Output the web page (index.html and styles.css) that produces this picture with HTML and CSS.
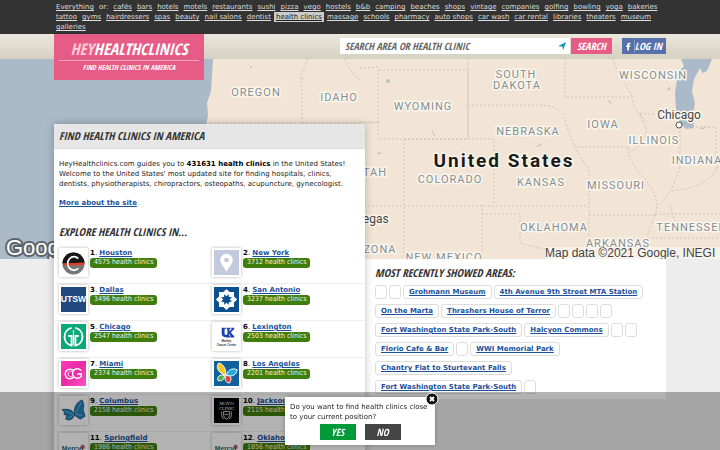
FILE: index.html
```html
<!DOCTYPE html>
<html lang="en">
<head>
    <meta charset="UTF-8">
    <meta name="viewport" content="width=device-width, initial-scale=1.0">
    <title>HeyHealthclinics</title>
    <link rel="stylesheet" href="styles.css">
</head>
<body>

    <nav class="topbar">
        <div class="wrap topbar-links">
            <a href="#">Everything</a><span>or:</span>
            <a href="#">cafés</a><a href="#">bars</a><a href="#">hotels</a><a href="#">motels</a><a href="#">restaurants</a><a href="#">sushi</a><a href="#">pizza</a><a href="#">vego</a><a href="#">hostels</a><a href="#">b&amp;b</a><a href="#">camping</a><a href="#">beaches</a><a href="#">shops</a><a href="#">vintage</a><a href="#">companies</a><a href="#">golfing</a><a href="#">bowling</a><a href="#">yoga</a><a href="#">bakeries</a>
            <a href="#">tattoo</a><a href="#">gyms</a><a href="#">hairdressers</a><a href="#">spas</a><a href="#">beauty</a><a href="#">nail salons</a><a href="#">dentist</a><a href="#" class="active">health clinics</a><a href="#">massage</a><a href="#">schools</a><a href="#">pharmacy</a><a href="#">auto shops</a><a href="#">car wash</a><a href="#">car rental</a><a href="#">libraries</a><a href="#">theaters</a><a href="#">museum</a>
            <a href="#">galleries</a>
        </div>
    </nav>

    <header class="header">
        <div class="wrap header-inner">
            <a href="#" class="logo">
                <span class="logo-name"><span class="logo-hey">HEY</span>HEALTHCLINICS</span>
                <span class="logo-tagline">FIND HEALTH CLINICS IN AMERICA</span>
            </a>
            <form class="search">
                <div class="search-field">
                    <input type="text" aria-label="Search area or health clinic" placeholder="SEARCH AREA OR HEALTH CLINIC">
                    <svg class="locate" viewBox="0 0 8 8"><path d="M0 4.2 8 0 5.2 8 4.2 4.6Z" fill="#1792b4"/></svg>
                </div>
                <button type="button" class="btn-search">SEARCH</button>
                <button type="button" class="btn-login"><svg viewBox="0 0 6 10"><path d="M1.6 10V5.6H.3V3.8h1.3V2.6C1.6 1 2.5.3 4 .3h1.5v1.800H4.500c-.6 0-.8.3-.8.8v.9h1.700l-.3 1.800H3.700V10Z" fill="#fff"/></svg><span>LOG IN</span></button>
            </form>
        </div>
    </header>

    <div class="map">
        <svg viewBox="0 0 720 200" preserveAspectRatio="xMidYMid slice">
            <rect width="720" height="200" fill="#f2e5d5"/>
            <path d="M0 0H213L211 32 207 44 208 56 206 68 211 84 216 110 230 150 250 200H0Z" fill="#abbac9"/>
            <path d="M681 0H712L707 12 702 14 700 9 694 20 692 32 695 44 693 55 694 69 686 70 680 64 676 50 675 34 678 14 684 7Z" fill="#abbac9"/>
            <g class="borders">
                <path d="M210 64H380M302 64V28C298 18 304 8 308 0M302 20H304M345 0C350 12 356 20 360 20M360 9 379 8"/>
                <path d="M379 11H468V80H378V11M468 0V80M468 46H540C552 46 561 50 564 58 567 68 571 80 575 87M565 0V38H632C634 52 640 56 648 64"/>
                <path d="M360 63H379M404 80H494V146M404 80V200M360 147H588M494 98H500M482 146V200M482 155H520V184C532 188 545 190 558 192"/>
                <path d="M577 88H628C630 96 638 90 643 80 652 68 640 64 640 52M575 87C578 100 589 104 589 114V196M589 156H655M628 88C628 110 650 118 656 140 660 155 650 164 647 179"/>
                <path d="M613 0C616 14 628 26 632 38M640 55H654M680 68H716V110M680 68V110C672 128 670 138 658 146M720 104C710 126 690 130 672 132M655 155H720M648 179H720M670 146 675 162"/>
            </g>
            <g fill="#c4c1b2"><circle cx="388" cy="22" r="2"/><circle cx="251" cy="8" r="1"/><path d="m431 69 3 8 1-1M534 88l9-4-3 3ZM607 41l5 5-2-4ZM667 31l3-4v4ZM376 95l6-3-2 3ZM699 70l8-3-4 3Z"/></g>
            <g class="state">
                <text x="256" y="37">OREGON</text>
                <text x="339" y="42">IDAHO</text>
                <text x="423" y="51">WYOMING</text>
                <text x="516" y="19">SOUTH</text>
                <text x="517" y="30">DAKOTA</text>
                <text x="653" y="20">WISCONSIN</text>
                <text x="528" y="76">NEBRASKA</text>
                <text x="603" y="69">IOWA</text>
                <text x="654" y="85">ILLINOIS</text>
                <text x="697" y="105">INDIANA</text>
                <text x="371" y="117">UTAH</text>
                <text x="450" y="124">COLORADO</text>
                <text x="541" y="127">KANSAS</text>
                <text x="616" y="130">MISSOURI</text>
                <text x="554" y="172">OKLAHOMA</text>
                <text x="691" y="172">TENNESSEE</text>
                <text x="618" y="188">ARKANSAS</text>
                <text x="370" y="194">ARIZONA</text>
                <text x="444" y="202">NEW MEXICO</text>
            </g>
            <text class="country" x="504" y="108">United States</text>
            <text class="city" x="679" y="60">Chicago</text>
            <circle cx="679" cy="66" r="3" fill="#fff" stroke="#555"/>
            <text class="city" x="361" y="164">Las Vegas</text>
            <text class="google" x="6" y="196">Google</text>
            <path d="M545 188H720V200H545Z" fill="#f8f5f0" opacity=".8"/>
            <text class="copyright" x="545" y="198">Map data ©2021 Google, INEGI</text>
        </svg>
    </div>

    <main class="wrap content">
        <section class="card">
            <h1>FIND HEALTH CLINICS IN AMERICA</h1>
            <div class="intro">
                <p>HeyHealthclinics.com guides you to <b>431631 health clinics</b> in the United States! Welcome to the United States' most updated site for finding hospitals, clinics, dentists, physiotherapists, chiropractors, osteopaths, acupuncture, gynecologist.</p>
                <p><a href="#">More about the site</a></p>
            </div>
            <h2>EXPLORE HEALTH CLINICS IN...</h2>
            <div class="cities">
                <div class="city-row">
                    <div class="city-item">
                        <svg class="thumb" viewBox="0 0 26 26"><rect width="26" height="26" fill="#fff"/><circle cx="13" cy="14" r="11.500" fill="#777"/><path d="M1.500 14a11.500 11.500 0 0 1 23 0Z" fill="#171717"/><path d="M2 14 24 13v2.500L2 16Z" fill="#e63b25"/><path d="M18 9A6.500 7 0 1 0 18 19" fill="none" stroke="#fff" stroke-width="1.800"/></svg>
                        <div class="city-info"><div><b>1</b>. <a href="#">Houston</a></div><span class="count">4575 health clinics</span></div>
                    </div>
                    <div class="city-item">
                        <svg class="thumb" viewBox="0 0 26 26"><rect width="26" height="26" fill="#c3cade"/><path d="M13 4a6.500 6.500 0 0 0-6.500 6.500C6.500 15 11 18 13 23c2-5 6.500-8 6.500-12.500A6.500 6.500 0 0 0 13 4Z" fill="#fff"/><circle cx="13" cy="10.500" r="2.500" fill="#c3cade"/></svg>
                        <div class="city-info"><div><b>2</b>. <a href="#">New York</a></div><span class="count">3712 health clinics</span></div>
                    </div>
                </div>
                <div class="city-row">
                    <div class="city-item">
                        <svg class="thumb" viewBox="0 0 26 26"><rect width="26" height="26" fill="#204a7d"/><text x="13" y="15.500" class="logo-text" font-size="9" fill="#fff">UTSW</text></svg>
                        <div class="city-info"><div><b>3</b>. <a href="#">Dallas</a></div><span class="count">3496 health clinics</span></div>
                    </div>
                    <div class="city-item">
                        <!-- ring of eight diamonds -->
                        <svg class="thumb" viewBox="0 0 26 26"><rect width="26" height="26" fill="#0b4f8f"/><g fill="#fff"><path id="petal" d="m13 2 4 4-4 3.500L9 6Z"/><use href="#petal" transform="rotate(45 13 13)"/><use href="#petal" transform="rotate(90 13 13)"/><use href="#petal" transform="rotate(135 13 13)"/><use href="#petal" transform="rotate(180 13 13)"/><use href="#petal" transform="rotate(225 13 13)"/><use href="#petal" transform="rotate(270 13 13)"/><use href="#petal" transform="rotate(315 13 13)"/></g></svg>
                        <div class="city-info"><div><b>4</b>. <a href="#">San Antonio</a></div><span class="count">3237 health clinics</span></div>
                    </div>
                </div>
                <div class="city-row">
                    <div class="city-item">
                        <svg class="thumb" viewBox="0 0 26 26"><rect width="26" height="26" fill="#08a878"/><g fill="none" stroke="#fff" stroke-width="2"><path d="M11 4A9.500 9.500 0 0 0 11 22.500V12.500H7.500M15 4A9.500 9.500 0 0 1 15 22.500V12.500H18.500"/><path d="M13 6.500V22" stroke-width="1.300"/></g></svg>
                        <div class="city-info"><div><b>5</b>. <a href="#">Chicago</a></div><span class="count">2547 health clinics</span></div>
                    </div>
                    <div class="city-item">
                        <svg class="thumb" viewBox="0 0 26 26"><rect width="26" height="26" fill="#fff"/><path d="M8 4h4v1.500h-1V10q0 1.500 1.500 1.500T14 10V5.500h-1V4h4v1.500h-1v2l2.500-2H18V4h3v1.500L17.500 8.500l2.500 3.500h1v2h-4v-2l-1.500-2v2h1v2h-3q-5.500 0-5.500-4V5.500H8Z" fill="#1b3fae"/><text x="13" y="19" class="logo-text" font-size="3" fill="#333">Markey</text><text x="13" y="23" class="logo-text" font-size="3" fill="#333">Cancer Center</text></svg>
                        <div class="city-info"><div><b>6</b>. <a href="#">Lexington</a></div><span class="count">2503 health clinics</span></div>
                    </div>
                </div>
                <div class="city-row">
                    <div class="city-item">
                        <svg class="thumb" viewBox="0 0 26 26"><defs><linearGradient id="pink" x2="1" y2="1"><stop stop-color="#ff3dbb"/><stop offset=".5" stop-color="#e72aa5"/><stop offset="1" stop-color="#ff56c7"/></linearGradient></defs><rect width="26" height="26" fill="url(#pink)"/><g fill="none" stroke="#fff" stroke-width="1.500"><path d="M13 10A5 5 0 1 0 13 17M21 10A5 5 0 1 0 21 16V13.500H17"/><path d="M12 11A3 3 0 1 0 12 16" stroke-width=".8"/></g></svg>
                        <div class="city-info"><div><b>7</b>. <a href="#">Miami</a></div><span class="count">2374 health clinics</span></div>
                    </div>
                    <div class="city-item">
                        <svg class="thumb" viewBox="0 0 26 26"><rect width="26" height="26" fill="#11609c"/><g stroke="#fff" stroke-width="1"><path d="M12 15C3 12 2 5 5 2c5 1 8 7 7 13Z" fill="#f5c72c"/><path d="M13 15c1-6 6-8 11-6 0 5-5 8-11 6Z" fill="#25a9df"/><path d="M11 15c-5-1-8 1-7 5 4 2 7-1 7-5Z" fill="#50af4b"/><path d="M13 15c5 0 6 4 3 8-4-1-6-4-3-8Z" fill="#e34333"/></g></svg>
                        <div class="city-info"><div><b>8</b>. <a href="#">Los Angeles</a></div><span class="count">2201 health clinics</span></div>
                    </div>
                </div>
                <div class="city-row">
                    <div class="city-item">
                        <svg class="thumb" viewBox="0 0 26 26"><rect width="26" height="26" fill="#fff"/><path d="M14 18C13 13 9 11 1 12l3 3-1 2 3 1-1 4 3 1q4 0 6-5Z" fill="#2482b8" stroke="#174d72" stroke-width=".8"/><path d="M14 18C13 10 16 4 22 2c2 4 2 7 1 10l2 7-5 3-6-4Z" fill="#2482b8" stroke="#174d72" stroke-width=".8"/><path d="m13 17-8-3M15 16l6-11M15 17l7 1M13 18l-6 3" stroke="#69b9da"/></svg>
                        <div class="city-info"><div><b>9</b>. <a href="#">Columbus</a></div><span class="count">2158 health clinics</span></div>
                    </div>
                    <div class="city-item">
                        <svg class="thumb" viewBox="0 0 26 26"><rect width="26" height="26" fill="#000"/><text x="13" y="7" class="logo-serif" font-size="5" fill="#fff">MAYO</text><text x="13" y="12" class="logo-serif" font-size="5" fill="#fff">CLINIC</text><path d="M10 14h6v4q0 3-3 4-3-1-3-4ZM8 14v4q0 2 2 4M18 14v4q0 2-2 4M11 17h4" fill="none" stroke="#fff" stroke-width=".8"/></svg>
                        <div class="city-info"><div><b>10</b>. <a href="#">Jacksonville</a></div><span class="count">2115 health clinics</span></div>
                    </div>
                </div>
                <div class="city-row">
                    <div class="city-item">
                        <svg class="thumb" viewBox="0 0 26 26"><rect width="26" height="26" fill="#fff"/><text x="11" y="17" class="logo-text" font-size="7" fill="#17677a">Mercy</text><path d="M22.500 10v8M20 12.500h5M21 10.500l3 4M24 10.500l-3 4" stroke="#a23c49" stroke-width="1"/></svg>
                        <div class="city-info"><div><b>11</b>. <a href="#">Springfield</a></div><span class="count">1986 health clinics</span></div>
                    </div>
                    <div class="city-item">
                        <svg class="thumb" viewBox="0 0 26 26"><rect width="26" height="26" fill="#fff"/><text x="11" y="17" class="logo-text" font-size="7" fill="#17677a">Mercy</text><path d="M22.500 10v8M20 12.500h5M21 10.500l3 4M24 10.500l-3 4" stroke="#a23c49" stroke-width="1"/></svg>
                        <div class="city-info"><div><b>12</b>. <a href="#">Oklahoma City</a></div><span class="count">1856 health clinics</span></div>
                    </div>
                </div>
            </div>
        </section>

        <aside class="recent">
            <h2>MOST RECENTLY SHOWED AREAS:</h2>
            <div class="tags">
                <span class="tag"></span><span class="tag"></span>
                <a href="#" class="tag">Grohmann Museum</a>
                <a href="#" class="tag">4th Avenue 9th Street MTA Station</a>
                <a href="#" class="tag">On the Marta</a>
                <a href="#" class="tag">Thrashers House of Terror</a>
                <span class="tag"></span><span class="tag"></span><span class="tag"></span><span class="tag"></span>
                <a href="#" class="tag">Fort Washington State Park-South</a>
                <a href="#" class="tag">Halcyon Commons</a>
                <span class="tag"></span><span class="tag"></span>
                <a href="#" class="tag">Florio Cafe &amp; Bar</a>
                <span class="tag"></span>
                <a href="#" class="tag">WWI Memorial Park</a>
                <a href="#" class="tag">Chantry Flat to Sturtevant Falls</a>
                <a href="#" class="tag">Fort Washington State Park-South</a>
                <span class="tag"></span>
            </div>
        </aside>
    </main>

    <div class="position-bar">
        <div class="dialog" role="dialog" aria-label="Find health clinics nearby">
            <button type="button" class="close" aria-label="Close"><svg viewBox="0 0 14 14"><circle cx="7" cy="7" r="6" fill="#111" stroke="#fff"/><path d="m5 5 4 4M9 5 5 9" stroke="#fff" stroke-width="1.800"/></svg></button>
            <p>Do you want to find health clinics close to your current position?</p>
            <div class="dialog-buttons">
                <button type="button" class="yes">YES</button>
                <button type="button" class="no">NO</button>
            </div>
        </div>
    </div>

</body>
</html>
```
FILE: styles.css
```css
* {
    box-sizing: border-box;
}
body {
    margin: 0;
    background: #ededed;
    color: #222;
    font-family: "DejaVu Sans", sans-serif;
    font-size: 7px;
    line-height: 10px;
    height: 100vh;
    overflow: hidden;
}
a {
    color: #1b519b;
}
.wrap {
    width: 85%;
    margin: 0 auto;
}
h1, h2, .logo, .search input, button {
    font-family: "Open Sans Condensed", "Liberation Sans Narrow", sans-serif;
    font-weight: bold;
    font-style: italic;
}
button {
    border: none;
    padding: 0;
    color: #fff;
    font-size: 10px;
    cursor: pointer;
}
.topbar {
    background: #333;
    padding: 2px 0;
}
.topbar-links {
    display: flex;
    flex-wrap: wrap;
    column-gap: 1px;
    color: #ddd;
}
.topbar-links a, .topbar-links span {
    padding: 0 2px;
    color: #ddd;
}
.topbar-links .active {
    background: #ccc;
    color: #222;
}
.header {
    position: relative;
    z-index: 2;
    height: 25px;
    background: linear-gradient(#ebe7dc, #d4d0c2);
}
.header-inner {
    display: flex;
    justify-content: space-between;
    align-items: flex-start;
}
.logo {
    display: flex;
    flex-direction: column;
    align-items: center;
    width: 150px;
    height: 46px;
    padding: 5px;
    background: #e65c86;
    color: #fff;
    text-decoration: none;
}
.logo-name {
    width: 100%;
    height: 23px;
    border-bottom: 1px solid #f3a5bd;
    font-size: 16px;
    line-height: 20px;
    text-align: center;
}
.logo-hey {
    color: #ffc9da;
}
.logo-tagline {
    font-size: 7px;
    line-height: 14px;
}
.search {
    display: flex;
    height: 16px;
    margin-top: 4px;
}
.search-field {
    display: flex;
    align-items: center;
    width: 230px;
    padding: 0 4px;
    background: #fff;
}
.search input {
    flex: 1;
    min-width: 0;
    border: none;
    padding: 0 1px;
    background: none;
    font-size: 10px;
}
.search input::placeholder {
    color: #666;
}
.locate {
    width: 8px;
    height: 8px;
}
.btn-search {
    width: 41px;
    margin-left: 1px;
    background: #e65c86;
}
.btn-login {
    display: flex;
    align-items: center;
    width: 44px;
    margin-left: 10px;
    padding: 0 4px;
    background: #5670ab;
}
.btn-login svg {
    width: 5px;
    height: 9px;
}
.btn-login span {
    flex: 1;
    margin-left: 3px;
    border-left: 1px solid #8699c4;
    white-space: nowrap;
}
.map {
    height: 200px;
    overflow: hidden;
}
.map svg {
    display: block;
    width: 100%;
    height: 100%;
}
.map text {
    font-family: Roboto, sans-serif;
    text-anchor: middle;
    paint-order: stroke;
    stroke: #fbf6ee;
    stroke-width: 3px;
    stroke-linejoin: round;
}
.map .borders {
    fill: none;
    stroke: #cfc4b8;
    stroke-dasharray: 2 2;
}
.map .state text {
    font-size: 11px;
    letter-spacing: 1px;
    fill: #858e92;
}
.map .country {
    font-size: 19px;
    font-weight: bold;
    letter-spacing: 2px;
    fill: #1b1b1b;
}
.map .city {
    font-size: 12px;
    fill: #444;
}
.map .google {
    font-family: "Liberation Sans", sans-serif;
    font-size: 22px;
    text-anchor: start;
    fill: #fff;
    stroke: #5d6468;
    stroke-width: 4px;
}
.map .copyright {
    font-family: "Liberation Sans", sans-serif;
    font-size: 12px;
    text-anchor: start;
    fill: #444;
    stroke: none;
}
.content {
    position: relative;
    display: flex;
    align-items: flex-start;
    margin-top: -135px;
}
.card {
    flex: 0 0 311px;
    background: #fff;
    box-shadow: 0 0 8px rgba(0, 0, 0, 0.25);
    z-index: 1;
}
h1, h2 {
    margin: 0;
    color: #333;
    font-size: 11px;
    line-height: 16px;
}
h1 {
    padding: 4px 5px;
    background: #e6e6e6;
    border-bottom: 1px solid #ddd;
}
.intro {
    padding: 10px 5px 0;
    color: #222;
}
.intro p {
    margin: 0 0 9px;
}
.intro b {
    color: #000;
}
.intro a {
    font-weight: bold;
}
.card h2 {
    padding: 7px 5px;
}
.city-row {
    display: grid;
    grid-template-columns: 153px 1fr;
    height: 37px;
    padding: 1px 5px 0;
    border-bottom: 1px solid #eee;
}
.city-item {
    display: flex;
    gap: 2px;
}
.thumb {
    width: 29px;
    height: 29px;
    border: 2px solid #fff;
    box-shadow: 0 0 3px rgba(0, 0, 0, 0.3);
}
.logo-text, .logo-serif {
    font-family: "Liberation Sans", sans-serif;
    font-weight: bold;
    text-anchor: middle;
}
.logo-serif {
    font-family: "Liberation Serif", serif;
    font-weight: normal;
}
.city-info a {
    font-weight: bold;
}
.city-info b {
    color: #000;
}
.count {
    display: block;
    width: max-content;
    height: 10px;
    padding: 0 4px;
    border-radius: 3px;
    background: #3f7d0c;
    color: #f1f7e8;
    font-family: "DejaVu Sans Condensed", "DejaVu Sans", sans-serif;
    line-height: 9px;
}
.recent {
    flex: 1;
    margin-top: 135px;
    padding: 6px 10px 5px;
    background: #fff;
}
.tags {
    display: flex;
    flex-wrap: wrap;
    gap: 5px 2px;
    padding-top: 4px;
}
.tag {
    height: 14px;
    padding: 0 5px;
    border: 1px solid #ddd;
    border-radius: 3px;
    font-weight: bold;
    line-height: 12px;
}
.position-bar {
    position: fixed;
    left: 0;
    right: 0;
    bottom: 0;
    z-index: 3;
    display: flex;
    justify-content: center;
    padding: 5px 0;
    background: rgba(0, 0, 0, 0.3);
}
.dialog {
    position: relative;
    width: 150px;
    padding: 5px;
    background: #fff;
    box-shadow: 0 0 4px rgba(0, 0, 0, 0.3);
}
.dialog p {
    margin: 0;
}
.dialog-buttons {
    display: flex;
    justify-content: center;
    gap: 9px;
    margin-top: 2px;
}
.dialog-buttons button {
    width: 36px;
    height: 16px;
}
.yes {
    background: #009a39;
}
.no {
    background: #444;
}
.close {
    position: absolute;
    top: -5px;
    right: -4px;
    width: 14px;
    height: 14px;
    background: none;
}
.close svg {
    display: block;
}
```
